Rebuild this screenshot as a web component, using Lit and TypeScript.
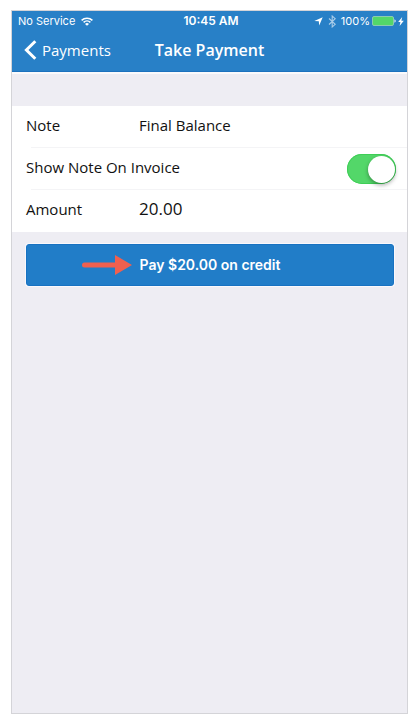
import { LitElement, html, css } from "lit";
import { customElement, state } from "lit/decorators.js";

@customElement("app-root")
export class AppRoot extends LitElement {
  @state() private note = "Final Balance";
  @state() private amount = "20.00";
  @state() private showNote = true;

  static styles = css`
    :host {
      display: flex;
      box-sizing: border-box;
      min-height: 100vh;
      padding: 10px 9px 9px 11px;
      background: #fff;
      font-family: "Open Sans", "Noto Sans", sans-serif;
      font-size: 15px;
      line-height: 20px;
      color: #111;
    }
    * {
      box-sizing: border-box;
    }
    .screen {
      flex: 1;
      min-width: 0;
      border: 1px solid #d4d4d8;
      background: #eeedf3;
    }
    .top {
      background: #2880c7;
      color: #fff;
      border-bottom: 1px solid #1c72be;
    }
    .status,
    .nav {
      display: grid;
      grid-template-columns: 1fr auto 1fr;
      align-items: center;
    }
    .status {
      height: 20px;
      padding: 0 3px 0 6px;
      font-family: Inter, sans-serif;
      font-size: 11px;
      line-height: 20px;
    }
    .group {
      display: flex;
      align-items: center;
      gap: 6px;
    }
    .end {
      justify-content: flex-end;
      gap: 2px;
    }
    .time {
      font-size: 12px;
      font-weight: 600;
    }
    .faded {
      opacity: 0.6;
    }
    .nav {
      height: 40px;
      padding: 0 12px 2px;
    }
    .back {
      display: flex;
      align-items: center;
      gap: 5px;
      color: inherit;
      text-decoration: none;
    }
    h1 {
      margin: 0;
      font-size: 16px;
      line-height: 20px;
      font-weight: 600;
    }
    svg {
      display: block;
      flex: none;
    }
    .strip {
      height: 34px;
      border-top: 2px solid #fafafc;
    }
    .rows {
      background: #fff;
    }
    .row {
      display: grid;
      grid-template-columns: 98px 1fr;
      align-items: center;
      gap: 15px;
      height: 42px;
      padding: 0 11px 4px 14px;
      background: linear-gradient(#f4f4f6, #f4f4f6) 19px 100% / 100% 1px no-repeat;
    }
    .row:last-child {
      background: none;
    }
    .row.toggle {
      grid-template-columns: 1fr auto;
      padding-bottom: 0;
    }
    .row.toggle span {
      padding-bottom: 4px;
    }
    .field {
      width: 100%;
      min-width: 0;
      height: 20px;
      padding: 0;
      border: 0;
      outline: 0;
      background: none;
      font: inherit;
      color: inherit;
    }
    .number {
      font-size: 17px;
    }
    .switch {
      appearance: none;
      display: grid;
      align-items: center;
      width: 49px;
      height: 30px;
      margin: 0;
      padding: 0 1px;
      border-radius: 15px;
      background: #d8d8dc;
    }
    .switch::before {
      content: "";
      width: 27px;
      height: 27px;
      border-radius: 50%;
      background: #fff;
      box-shadow: 0 2px 4px rgba(0, 0, 0, 0.35);
    }
    .switch:checked {
      background: #53d769;
      box-shadow: inset 0 0 0 1px #3fce57;
    }
    .switch:checked::before {
      justify-self: end;
    }
    .actions {
      padding: 12px 13px 12px 14px;
    }
    .pay {
      display: grid;
      grid-template-columns: 1fr auto 1fr;
      align-items: center;
      gap: 8px;
      width: 100%;
      height: 42px;
      padding: 0;
      border: 1px solid #1872c2;
      border-radius: 3px;
      background: #217dc8;
      box-shadow: 0 0 0 1px #f8f8fc;
      color: #fff;
      font-family: Inter, sans-serif;
      font-size: 14px;
      line-height: 20px;
      font-weight: 600;
    }
    .arrow {
      justify-self: end;
    }
  `;

  render() {
    return html`
      <main class="screen">
        <header class="top">
          <div class="status">
            <div class="group">
              <span>No Service</span>
              <svg width="12" height="9" viewBox="0 0 12 9" fill="none" stroke="#fff" stroke-width="1.5">
                <path d="M.6 3.4a7.7 7.7 0 0 1 10.8 0M2.6 5.4a4.9 4.9 0 0 1 6.8 0" />
                <path d="M6 8.8 4 6.9a2.9 2.9 0 0 1 4 0z" fill="#fff" stroke="none" />
              </svg>
            </div>
            <span class="time">10:45 AM</span>
            <div class="group end">
              <svg width="9" height="9" viewBox="0 0 9 9" fill="#fff"><path d="M8.7.3 5.2 8.6 4.8 4.3.3 4z" /></svg>
              <svg class="faded" width="14" height="13" viewBox="0 0 14 13" fill="none" stroke="#fff" stroke-width="1.1">
                <path d="m4 3.5 6.2 5.8L7.2 12V1l3 2.7L4 9.5" />
              </svg>
              <span>100%</span>
              <svg width="24" height="10" viewBox="0 0 24 10">
                <rect x=".5" y=".5" width="21" height="9" rx="1.5" fill="#53d769" stroke="#8bcbb0" />
                <path d="M22.5 3.2a2 2 0 0 1 0 3.6z" fill="#fff" />
              </svg>
              <svg width="6" height="9" viewBox="0 0 6 9" fill="#fff"><path d="M4.2 0 .2 5h2.2L1.6 9l4.2-5.2H3.4z" /></svg>
            </div>
          </div>
          <nav class="nav">
            <a class="back" href="#payments">
              <svg width="13" height="20" viewBox="0 0 13 20" fill="none" stroke="#fff" stroke-width="3">
                <path d="M11.3 1.2 2.4 10l8.9 8.8" />
              </svg>
              <span>Payments</span>
            </a>
            <h1>Take Payment</h1>
          </nav>
        </header>

        <div class="strip"></div>

        <section class="rows">
          <label class="row">
            <span>Note</span>
            <input class="field" type="text" .value=${this.note}
              @input=${(e: Event) => (this.note = (e.target as HTMLInputElement).value)} />
          </label>
          <label class="row toggle">
            <span>Show Note On Invoice</span>
            <input class="switch" type="checkbox" role="switch" .checked=${this.showNote}
              @change=${(e: Event) => (this.showNote = (e.target as HTMLInputElement).checked)} />
          </label>
          <label class="row">
            <span>Amount</span>
            <input class="field number" type="text" inputmode="decimal" .value=${this.amount}
              @input=${(e: Event) => (this.amount = (e.target as HTMLInputElement).value)} />
          </label>
        </section>

        <div class="actions">
          <button class="pay" type="button">
            <svg class="arrow" width="50" height="20" viewBox="0 0 50 20" fill="#f0604f">
              <path d="M2.5 7.5H33V0l17 10-17 10v-7.5H2.5a2.5 2.5 0 0 1 0-5z" />
            </svg>
            <span>Pay $${this.amount} on credit</span>
          </button>
        </div>
      </main>
    `;
  }
}
